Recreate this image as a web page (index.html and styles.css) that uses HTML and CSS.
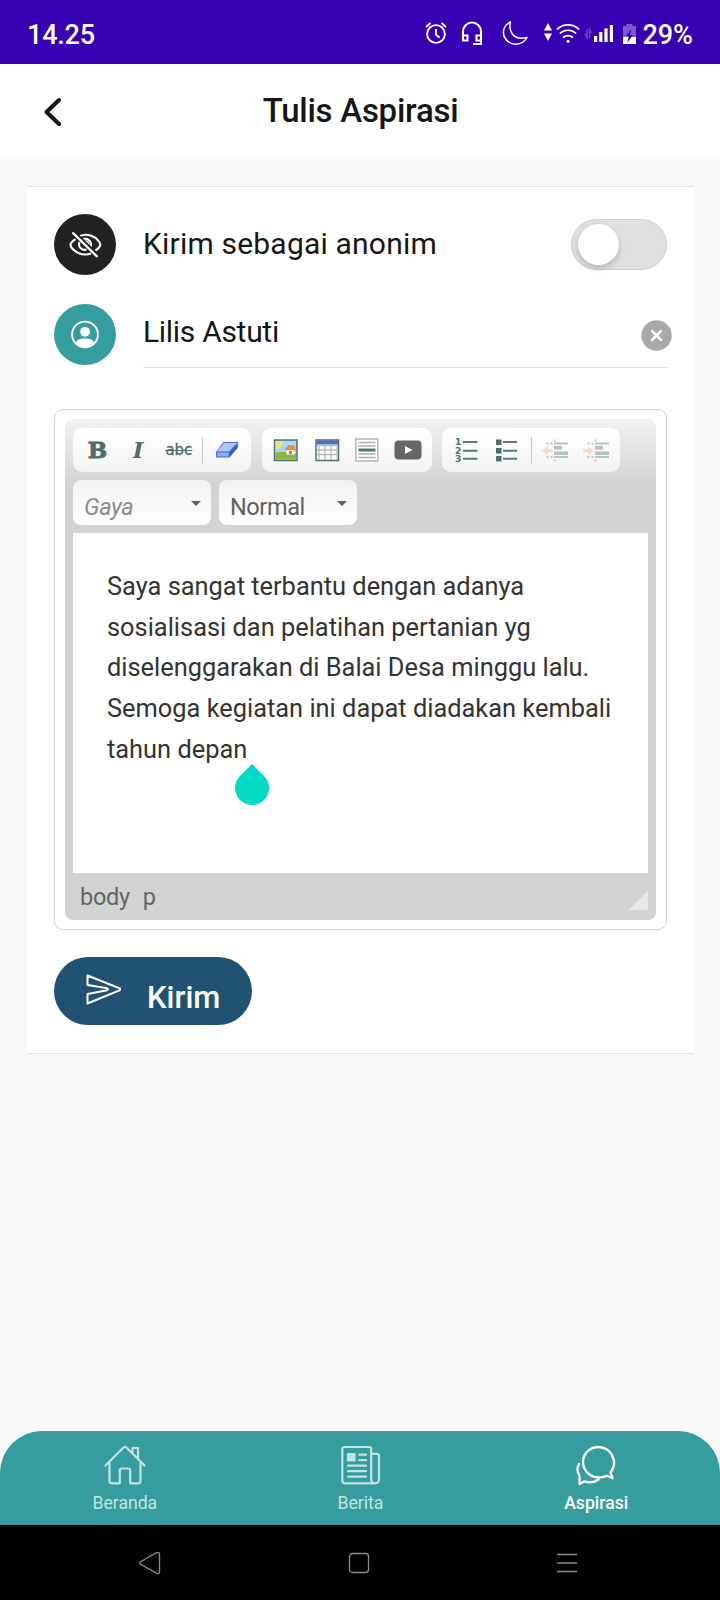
FILE: index.html
```html
<!DOCTYPE html>
<html lang="id">
<head>
<meta charset="utf-8">
<title>Tulis Aspirasi</title>
<link rel="stylesheet" href="styles.css">
</head>
<body>
<div class="screen">
  <div class="statusbar">
    <span class="time">14.25</span>
    <div class="status-icons">
      <svg class="alarm" width="22" height="28" viewBox="0 0 22 28" fill="none" stroke="#fff" stroke-width="1.9"><circle cx="11" cy="16" r="8.9"/><path d="M11 11v5.5l3.5 3.2M1 9l4.5-4M21 9l-4.500-4"/></svg>
      <svg class="headset" width="22" height="28" viewBox="0 0 22 28" fill="none" stroke="#fff" stroke-width="2.1"><path d="M2 20v-6.500a9 9 0 0 1 18 0V26h-8M2 17.500h4.500v5H2zM20 17.500h-4.500v5H20z"/></svg>
      <svg class="moon" width="26" height="28" viewBox="0 0 26 28" fill="none" stroke="#fff" stroke-width="1.500" stroke-linejoin="round"><path d="M8.500 4C2 7-.5 14 3 20c4.500 8 17 8.500 22-.5-6 1.500-12 .5-15-4C7.500 12 7.500 8 8.500 4z"/></svg>
      <svg class="updown" width="8" height="28" viewBox="0 0 8 28" fill="#fff"><path d="M4 5l4 7.500H0zM4 23l4-7.500H0z"/></svg>
      <svg class="wifi" width="24" height="28" viewBox="0 0 24 28" fill="none" stroke="#fff" stroke-width="1.700"><path d="M.8 11.500a16 16 0 0 1 22.400 0M3.800 15.500a12 12 0 0 1 16.400 0M7 19.500a7.500 7.500 0 0 1 10 0"/><circle cx="12" cy="23.300" r="1.500" fill="#fff" stroke="none"/></svg>
      <svg class="data" width="8" height="28" viewBox="0 0 8 28" fill="none" stroke="#fff" stroke-opacity=".25" stroke-width="1.500"><path d="M3 11v8.500L.5 16M5.500 20v-8.500L7.500 15"/></svg>
      <svg class="signal" width="20" height="28" viewBox="0 0 20 28" fill="#fff"><path d="M0 18h3.200v6H0zM5.200 14h3.200v10H5.200zM10.400 10.500h3.200V24h-3.200zM15.800 7H19v17h-3.200z"/></svg>
      <svg class="battery" width="13" height="28" viewBox="0 0 13 28"><path d="M3.500 6h6v2H13v11H0V8h3.500z" fill="#fff" opacity=".35"/><path d="M0 19h13v7H0z" fill="#fff"/><path d="M8.500 11L3 18h3l-2 7 6-8H7z" fill="#3700b3"/></svg>
      <span class="percent">29%</span>
    </div>
  </div>

  <div class="header">
    <svg class="back" width="20" height="32" viewBox="0 0 20 32" fill="none" stroke="#151716" stroke-width="4" stroke-linecap="round" stroke-linejoin="round"><path d="M15 4L2.500 16 15 28"/></svg>
    <h1 class="title">Tulis Aspirasi</h1>
  </div>

  <div class="content">
    <div class="card">
      <div class="row">
        <div class="avatar dark">
          <svg width="34" height="28" viewBox="0 0 34 28" fill="none" stroke="#fff" stroke-width="2.100"><path d="M11.500 5.200C19 1.700 27 5 30.500 10q3.500 3.500 0 7c-1 1.200-2 2-3.300 2.800M7.500 8.200c-2 1.300-5 4-5 5.600 0 2.700 6 9.700 14.500 9.700 2.300 0 4.300-.4 6-1"/><path d="M15 8a6 6 0 0 1 7.500 8M11.500 11c-2 5 3 9 7 7.500"/><path d="M15.500 10.500c4-.8 5.500 1.500 4.800 4.500z" fill="#fff"/><path d="M5.500 1l25 24.500" stroke="#222" stroke-width="4"/><path d="M4.500 1.500l25 24.500" stroke-width="2.400"/></svg>
        </div>
        <span class="label anon">Kirim sebagai anonim</span>
        <div class="toggle"><div class="knob"></div></div>
      </div>
      <div class="row name-row">
        <div class="avatar teal">
          <svg width="30" height="30" viewBox="0 0 30 30"><circle cx="15" cy="14.500" r="12.900" fill="none" stroke="#fff" stroke-width="1.900"/><circle cx="15" cy="11.800" r="4.900" fill="#fff"/><path d="M6 23.300q0-4.800 9-4.800t9 4.800Q20 27.500 15 27.500t-9-4.200z" fill="#fff"/></svg>
        </div>
        <div class="field">
          <span class="label name">Lilis Astuti</span>
          <svg class="clear" width="31" height="31" viewBox="0 0 31 31"><circle cx="15.500" cy="15.500" r="15.200" fill="#a6a9a8"/><path d="M11 11l9 9M20 11l-9 9" stroke="#fff" stroke-width="2.500" stroke-linecap="round"/></svg>
        </div>
      </div>

      <div class="editor">
        <div class="editor-inner">
          <div class="toolbar">
            <div class="group">
              <span class="tool bold">B</span>
              <span class="tool italic">I</span>
              <span class="tool strike">abc</span>
              <i class="sep"></i>
              <span class="tool"><svg width="28" height="28" viewBox="0 0 28 28"><path d="M10.500 6H25l-.5 5.500L16.500 21.500H3V16z" fill="#4a6ad4"/><path d="M11 7h13l-8 8.500H4z" fill="#a9c9fa"/><path d="M4 16.500h11.500v4H4z" fill="#82adf2"/><path d="M17 16l7.500-8v4L17 20.500z" fill="#3158cf"/></svg></span>
            </div>
            <div class="group">
              <span class="tool"><svg width="28" height="28" viewBox="0 0 28 28"><rect x="2.500" y="4" width="22.500" height="20.500" fill="#a5d8f8" stroke="#4d716f" stroke-width="1.500"/><path d="M3.500 5h8q0 7-8 8z" fill="#f4df78"/><path d="M3.500 17q8-3 20.700 1v5.500H3.500z" fill="#8db73f"/><path d="M14.500 13.500h8v5h-8z" fill="#f6f2e6"/><path d="M12.500 14l4-5 6 .5 1.500 5z" fill="#f08b3c"/><path d="M17 15h3v3h-3z" fill="#7799b1"/></svg></span>
              <span class="tool"><svg width="28" height="28" viewBox="0 0 28 28"><rect x="3" y="4" width="22.500" height="20.500" fill="#fff" stroke="#4d716f" stroke-width="1.500"/><path d="M3.500 4.500H25v4H3.500z" fill="#496fc0"/><path d="M4 9.500h20.700M4 14h20.700M4 18.500h20.700M6 9v15M12 9v15M18 9v15M24 9v15" stroke="#b8b8b8" stroke-width="1.300"/></svg></span>
              <span class="tool"><svg width="28" height="28" viewBox="0 0 28 28"><rect x="2.800" y="3" width="22" height="22" fill="#fff" stroke="#bbb" stroke-width="1.600"/><path d="M5.500 6.500h17M5.500 10h17M5.500 18h17M5.500 21.500h17" stroke="#b0b0b0" stroke-width="1.300"/><path d="M5.500 14h17" stroke="#4d7b76" stroke-width="3"/></svg></span>
              <span class="tool"><svg width="28" height="28" viewBox="0 0 28 28"><rect x=".5" y="4.500" width="27" height="19" rx="4" fill="#666"/><path d="M11 10l7.500 4-7.500 4z" fill="#fff"/></svg></span>
            </div>
            <div class="group">
              <span class="tool list"><span class="nums"><b>1</b><b>2</b><b>3</b></span><svg width="15" height="28" viewBox="0 0 15 28"><path d="M0 6h14.500M0 14.700h14.500M0 22.700h14.500" stroke="#567b79" stroke-width="2"/></svg></span>
              <span class="tool"><svg width="28" height="28" viewBox="0 0 28 28"><path d="M3 3.500h5.500V9H3zM3 12h5.500v5.500H3zM3 20h5.500v5.500H3z" fill="#4c6f6e"/><path d="M10 6h14M10 14.700h14M10 22.700h14" stroke="#567b79" stroke-width="2"/></svg></span>
              <i class="sep"></i>
              <span class="tool"><svg width="28" height="28" viewBox="0 0 28 28"><path d="M1 14.700L7 10v3.200h4.500v3H7v3.300z" fill="#fcdcb0"/><path d="M13 7.500h14M13 21h14" stroke="#b7c6c5" stroke-width="2"/><path d="M13 10h8v3.500h-8zM13 15.500h14V19H13z" fill="#b2c3c2"/><path d="M5.500 7.500h6M5.500 21h6" stroke="#bacac9" stroke-width="2" stroke-dasharray="2 2"/><path d="M12.500 3.500h2v2h-2zM12.500 23.500h2v2h-2z" fill="#bacac9"/></svg></span>
              <span class="tool"><svg width="28" height="28" viewBox="0 0 28 28"><path d="M11.500 14.700L6 10v3.200H1v3h5v3.300z" fill="#fcdcb0"/><path d="M13 7.500h14M13 21h14" stroke="#b7c6c5" stroke-width="2"/><path d="M13 10h8v3.500h-8zM13 15.500h14V19H13z" fill="#b2c3c2"/><path d="M5.500 7.500h6M5.500 21h6" stroke="#bacac9" stroke-width="2" stroke-dasharray="2 2"/><path d="M12.500 3.500h2v2h-2zM12.500 23.500h2v2h-2z" fill="#bacac9"/></svg></span>
            </div>
          </div>
          <div class="combos">
            <div class="combo"><span class="placeholder">Gaya</span><i class="arrow"></i></div>
            <div class="combo"><span>Normal</span><i class="arrow"></i></div>
          </div>
          <div class="document">
            <p class="text">Saya sangat terbantu dengan adanya<br>sosialisasi dan pelatihan pertanian yg<br>diselenggarakan di Balai Desa minggu lalu.<br>Semoga kegiatan ini dapat diadakan kembali<br><span class="last">tahun depan<svg class="handle" width="34" height="41" viewBox="0 0 34 41"><path d="M17 0L29 12A17 17 0 1 1 5 12z" fill="#03dac5"/></svg></span></p>
          </div>
          <div class="path"><span>body</span><span>p</span><i class="resize"></i></div>
        </div>
      </div>

      <div class="send">
        <svg width="36" height="32" viewBox="0 0 36 32" fill="none" stroke="#fff" stroke-width="2" stroke-linejoin="round"><path d="M2.500 1.500L35 14.500q1.200.8 0 1.600L2.500 29.500V20L21 16.500q4-1.200 0-2.500L2.500 11z"/></svg>
        <span class="send-text">Kirim</span>
      </div>
    </div>
  </div>

  <div class="tabs">
    <div class="tab">
      <svg width="42" height="40" viewBox="0 0 42 40" fill="none" stroke="currentColor" stroke-width="2.200" stroke-linejoin="round" stroke-linecap="round"><path d="M1.500 20.500L19.500 2.500q1.500-1.200 3 0l18 18M5.500 17.500v18.500q0 2.300 2.300 2.300h8V25.500q0-2 2-2h6.400q2 0 2 2v12.800h8q2.300 0 2.300-2.300V17.500M28.500 7.500V3h5.500v10.500"/></svg>
      <span>Beranda</span>
    </div>
    <div class="tab">
      <svg width="40" height="40" viewBox="0 0 40 40" fill="none" stroke="currentColor" stroke-width="2.200" stroke-linejoin="round" stroke-linecap="round"><path d="M3.500 2h24.500q2.200 0 2.200 2.300V34q0 4.300 3.900 4.300t3.900-4.300V11q0-2.200-2.200-2.200h-5.600M3.500 2Q1.300 2 1.300 4.200v31q0 3.100 3.100 3.100h29.700"/><path d="M7 9h6.500v6.500H7z" fill="currentColor"/><path d="M18.300 9.700H25M18.300 15.200H25M7 20.700H25M7 26.200H25M7 31.700H25"/></svg>
      <span>Berita</span>
    </div>
    <div class="tab active">
      <svg width="42" height="40" viewBox="0 0 42 40" fill="none" stroke="currentColor" stroke-width="2.300" stroke-linejoin="round" stroke-linecap="round"><path d="M35.500 27.500C39 23 40 18 38.200 13 36 6 30 2 23.500 2 15 2 8 8.500 8 17c0 8.500 7 15.500 15.500 15.500 3 0 6-.7 8.500-1.800l5.500 2.500c-.2-2.500-1.500-3.500-2-5.700zM4 19c-2.500 4.500-2 8 .5 12v8l5-2.700c5 1.800 10 1 14-1.800"/></svg>
      <span>Aspirasi</span>
    </div>
  </div>

  <div class="sysnav">
    <svg width="24" height="24" viewBox="0 0 24 24" fill="none" stroke="#8c8c8c" stroke-width="1.300"><path d="M2.600 10.700L18.500 1.700q3-1 3 1.800v17.300q0 2.600-2.800 1.600L2.600 13.300q-2-1.300 0-2.600z"/></svg>
    <svg width="24" height="24" viewBox="0 0 24 24" fill="none" stroke="#8c8c8c" stroke-width="1.300"><rect x="2.500" y="2.500" width="19" height="19" rx="3"/></svg>
    <svg width="24" height="24" viewBox="0 0 24 24" fill="none" stroke="#8c8c8c" stroke-width="1.400"><path d="M1 3.500h20M1 12h20M1 20.500h20"/></svg>
  </div>
</div>
</body>
</html>
```

FILE: styles.css
```css
* { box-sizing: border-box; }
body { margin: 0; font-family: Roboto, "Liberation Sans", sans-serif; color: #151716; }
svg { display: block; flex: none; }
.screen { width: 720px; height: 1600px; background: #f9f9f9; display: flex; flex-direction: column; overflow: hidden; }

.statusbar { height: 64px; background: #3700b3; color: #fff; display: flex; align-items: center; justify-content: space-between; padding: 0 27px; font-size: 27px; font-weight: 500; line-height: 32px; }
.time { letter-spacing: -.2px; padding-top: 6px; }
.status-icons { display: flex; align-items: center; }
.percent { padding-top: 6px; margin-left: 6px; }
.headset { margin-left: 14px; }
.moon { margin-left: 19px; }
.updown { margin-left: 16px; }
.wifi { margin-left: 4px; }
.data { margin-left: 4px; }
.signal { margin-left: 2px; }
.battery { margin-left: 9px; }

.header { height: 95px; background: #fff; display: grid; grid-template-columns: 100px 1fr 100px; align-items: center; }
.back { margin-left: 44px; }
.title { margin: 0; text-align: center; font-size: 33px; font-weight: 500; line-height: 40px; padding: 0 0 2px 1px; letter-spacing: -.25px; }

.content { flex: 1; padding: 27px 26px 0 27px; }
.card { height: 868px; background: #fff; border: solid #e0e0e0; border-width: 1px 0; padding: 27px; }
.row { display: flex; align-items: center; height: 61px; }
.avatar { width: 62px; height: 61px; border-radius: 50%; display: flex; align-items: center; justify-content: center; flex: none; }
.dark { background: #222; }
.teal { background: #369d9e; }
.label { font-size: 30px; line-height: 36px; margin-left: 27px; flex: 1; }
.anon { letter-spacing: .2px; padding-bottom: 2px; }
.toggle { width: 96px; height: 51px; border-radius: 26px; background: #e0e0e0; border: 1px solid #d0d0d0; padding: 4px 6px; }
.knob { width: 41px; height: 41px; border-radius: 50%; background: #fff; box-shadow: 0 3px 6px rgba(0,0,0,.2); }
.name-row { margin-top: 29px; align-items: flex-start; }
.field { flex: 1; height: 64px; margin-left: 27px; border-bottom: 1px solid #e0e0e0; display: flex; }
.name { margin: 10px 0 0; letter-spacing: -.3px; }
.clear { margin: 16px -5px 0 0; }

.editor { margin-top: 44px; height: 521px; border: 1px solid #d3d3d3; border-radius: 9px; padding: 9px 10px; }
.editor-inner { height: 501px; border-radius: 8px; padding: 9px 8px 0; background: linear-gradient(#f2f2f2, #d3d3d3 66px); }
.toolbar { display: flex; gap: 10px; }
.group:first-child { margin-right: 1px; }
.group { height: 44px; border-radius: 9px; padding: 0 4px; background: linear-gradient(#fff, #f3f3f3); display: flex; align-items: center; }
.tool { width: 40.75px; height: 44px; display: flex; align-items: center; justify-content: center; color: #4c6f6e; }
.group:nth-child(2) .tool { width: 40.5px; }
.bold { font: bold 23px/44px "DejaVu Serif", serif; -webkit-text-stroke: .8px #4c6f6e; }
.italic { font: italic bold 23px/44px "DejaVu Serif", serif; }
.strike { font: 15px/44px "DejaVu Sans", sans-serif; text-decoration: line-through; -webkit-text-stroke: .3px #4c6f6e; }
.sep { width: 1px; height: 27px; margin: 0 3px; background: #c8c8c8; }
.nums { display: flex; flex-direction: column; width: 8px; padding-top: 2px; font: bold 9px/8.500px "DejaVu Sans", sans-serif; }
.combos { display: flex; gap: 8px; margin-top: 8px; }
.combo { width: 138px; height: 45px; border-radius: 8px; background: linear-gradient(#f2f2f2, #fff); padding: 7px 10px 0 11px; display: flex; justify-content: space-between; font-size: 23.500px; line-height: 40px; color: #606060; letter-spacing: -.4px; }
.placeholder { font-style: italic; color: #8c8c8c; }
.arrow { border: 5px solid transparent; border-top-color: #606060; height: 0; margin-top: 14px; }
.document { height: 340px; margin-top: 8px; background: #fff; padding: 33px 0 0 34px; }
.text { margin: 0; font-size: 25.4px; line-height: 40.700px; color: #333; white-space: nowrap; }
.last { position: relative; }
.handle { position: absolute; right: -22px; top: 30px; }
.path { height: 47px; display: flex; gap: 13px; padding-left: 7px; font-size: 23.500px; line-height: 49px; color: #60676a; letter-spacing: -.3px; }
.resize { margin: 17px 0 0 auto; width: 20px; height: 20px; background: linear-gradient(135deg, transparent 50%, #e8e8e8 50%); }

.send { margin-top: 27px; width: 198px; height: 68px; border-radius: 34px; background: #215273; color: #fff; display: flex; padding: 17px 0 0 31px; }
.send-text { margin-left: 26px; font-size: 31px; font-weight: 500; line-height: 36px; padding-top: 6px; }

.tabs { height: 94px; border-radius: 42px 42px 0 0; background: #369d9e; display: flex; padding: 14px 6px 0 7px; }
.tab { flex: 1; display: flex; flex-direction: column; align-items: center; color: #c3e2e2; font-size: 17.6px; line-height: 22px; }
.tab span { margin-top: 7px; }
.active { color: #fff; font-weight: 500; }
.sysnav { height: 75px; background: #000; display: flex; justify-content: space-between; align-items: center; padding: 0 140px 0 138px; }
```
